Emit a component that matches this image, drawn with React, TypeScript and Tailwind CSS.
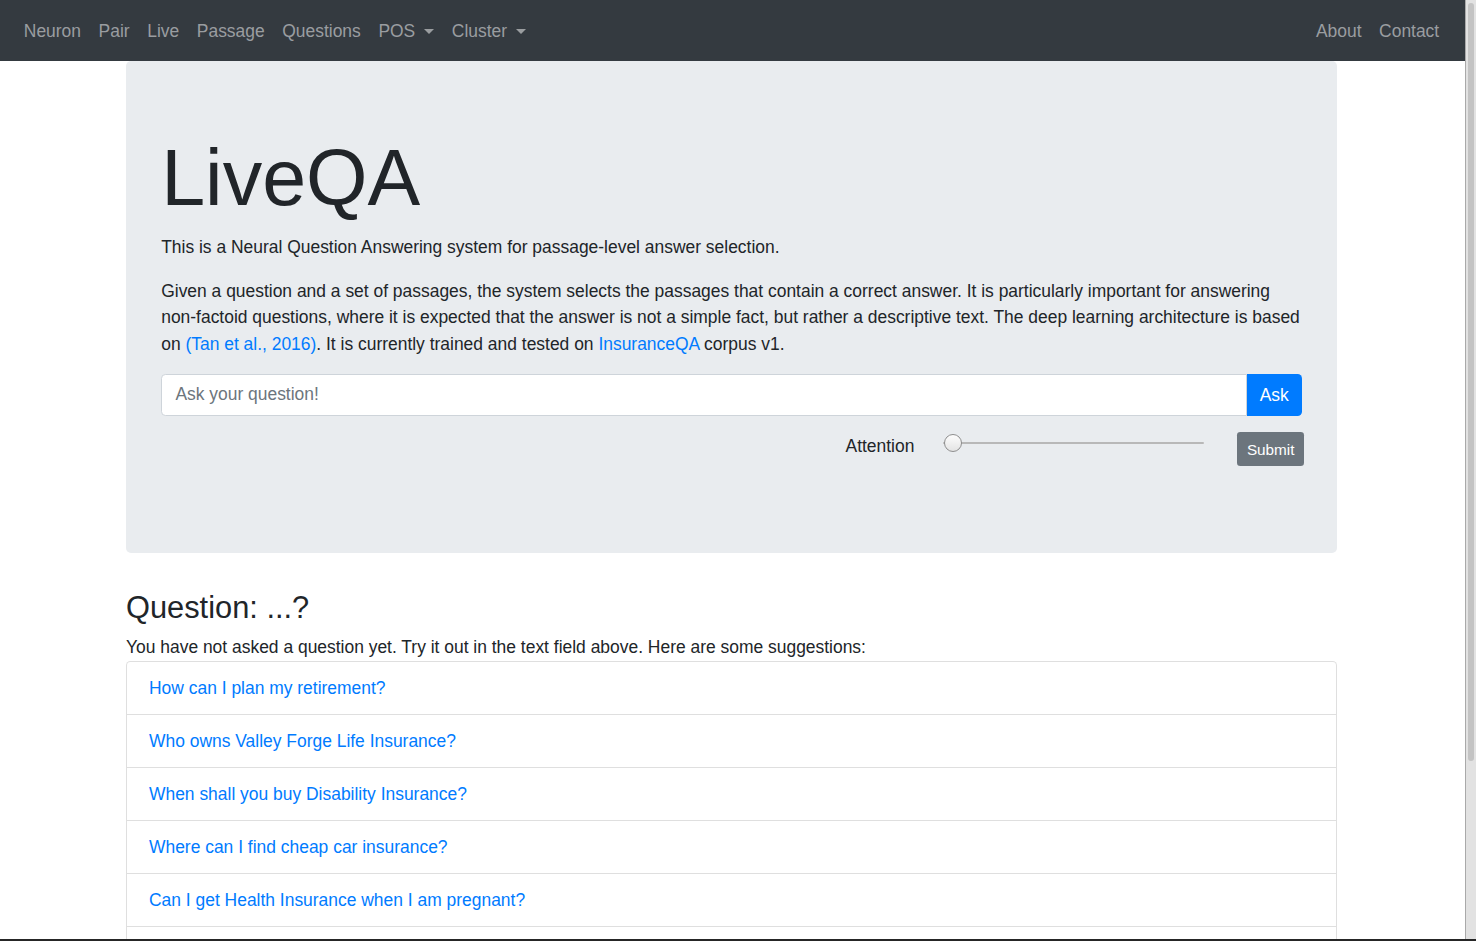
const navLeft = ["Neuron", "Pair", "Live", "Passage", "Questions"];

const suggestions = [
  "How can I plan my retirement?",
  "Who owns Valley Forge Life Insurance?",
  "When shall you buy Disability Insurance?",
  "Where can I find cheap car insurance?",
  "Can I get Health Insurance when I am pregnant?",
  "What does Medicare Part B cover?",
];

function Caret() {
  return (
    <span className="ml-[9px] inline-block h-0 w-0 border-x-[5.3px] border-t-[5.3px] border-x-transparent border-t-[#9a9da0] align-[3.5px]" />
  );
}

function NavLink({ label, dropdown }: { label: string; dropdown?: boolean }) {
  return (
    <a href="#" className="px-[8.8px] py-[8.8px] text-[#9a9da0] hover:text-[#c0c3c6]">
      {label}
      {dropdown ? <Caret /> : null}
    </a>
  );
}

function Slider() {
  return (
    <div className="relative mt-[2px] flex h-[18px] w-[261px] items-center">
      <div className="h-[2px] w-full rounded bg-[#b8b8b8]" />
      <div className="absolute left-[1px] top-0 h-[18px] w-[18px] rounded-full border border-[#8e8e8e] bg-gradient-to-b from-[#fdfdfd] to-[#e4e4e4]" />
    </div>
  );
}

export default function App() {
  return (
    <div
      className="flex h-[941px] overflow-hidden border-b-2 border-[#262626] bg-white text-[17.45px] leading-[26.4px] text-[#212529]"
      style={{ fontFamily: '"Liberation Sans", Arial, sans-serif' }}
    >
      <div className="flex-1">
        <nav className="flex h-[61px] items-center justify-between bg-[#343a40] pl-[15px] pr-[17px] pt-[2px]">
          <div className="flex items-center">
            {navLeft.map((l) => (
              <NavLink key={l} label={l} />
            ))}
            <NavLink label="POS" dropdown />
            <NavLink label="Cluster" dropdown />
          </div>
          <div className="flex items-center">
            <NavLink label="About" />
            <NavLink label="Contact" />
          </div>
        </nav>

        <div className="ml-[126px] w-[1211px]">
          <div className="mb-[35.2px] rounded-[5px] bg-[#e9ecef] pb-[70.4px] pl-[35.2px] pr-[33px] pt-[70px]">
            <h1 className="mb-[8.8px] text-[79px] font-light leading-[94px]">LiveQA</h1>
            <p className="mb-[17.6px]">
              This is a Neural Question Answering system for passage-level answer selection.
            </p>
            <p className="mb-[17px]">
              Given a question and a set of passages, the system selects the passages that contain a correct
              answer. It is particularly important for answering non-factoid questions, where it is expected
              that the answer is not a simple fact, but rather a descriptive text. The deep learning
              architecture is based on{" "}
              <a href="#" className="text-[#007bff]">
                (Tan et al., 2016)
              </a>
              . It is currently trained and tested on{" "}
              <a href="#" className="text-[#007bff]">
                InsuranceQA
              </a>{" "}
              corpus v1.
            </p>

            <div className="mr-[2px] flex">
              <input
                type="text"
                placeholder="Ask your question!"
                className="h-[41.6px] flex-1 rounded-l-[4.4px] border border-[#ced4da] bg-white px-[13.2px] text-[17.45px] text-[#495057] placeholder:text-[#6c757d] focus:outline-none"
              />
              <button className="h-[41.6px] rounded-r-[4.4px] bg-[#007bff] px-[13.2px] text-white">Ask</button>
            </div>

            <div className="mb-[17px] mt-[16.6px] flex items-start justify-end">
              <span className="mt-[1px]">Attention</span>
              <div className="ml-[29px]">
                <Slider />
              </div>
              <button className="ml-[33px] h-[33.9px] rounded-[3.3px] bg-[#6c757d] px-[9.5px] text-[15.3px] leading-[23.1px] text-white">
                Submit
              </button>
            </div>
          </div>

          <h3 className="mb-[8.8px] text-[30.8px] leading-[37px]">Question: ...?</h3>
          <p>You have not asked a question yet. Try it out in the text field above. Here are some suggestions:</p>
          <ul className="rounded-t-[4.4px] border-x border-t border-[#dfdfdf]">
            {suggestions.map((q) => (
              <li key={q} className="border-b border-[#dfdfdf] px-[22px] py-[13px] leading-[26px]">
                <a href="#" className="text-[#007bff]">
                  {q}
                </a>
              </li>
            ))}
          </ul>
        </div>
      </div>

      <div className="flex w-[11px] flex-col border-l border-[#a9a9a9] bg-[#e2e2e2] pt-[3px]">
        <div className="mx-auto h-[758px] w-[6px] rounded-full bg-[#c3c3c3]" />
      </div>
    </div>
  );
}
